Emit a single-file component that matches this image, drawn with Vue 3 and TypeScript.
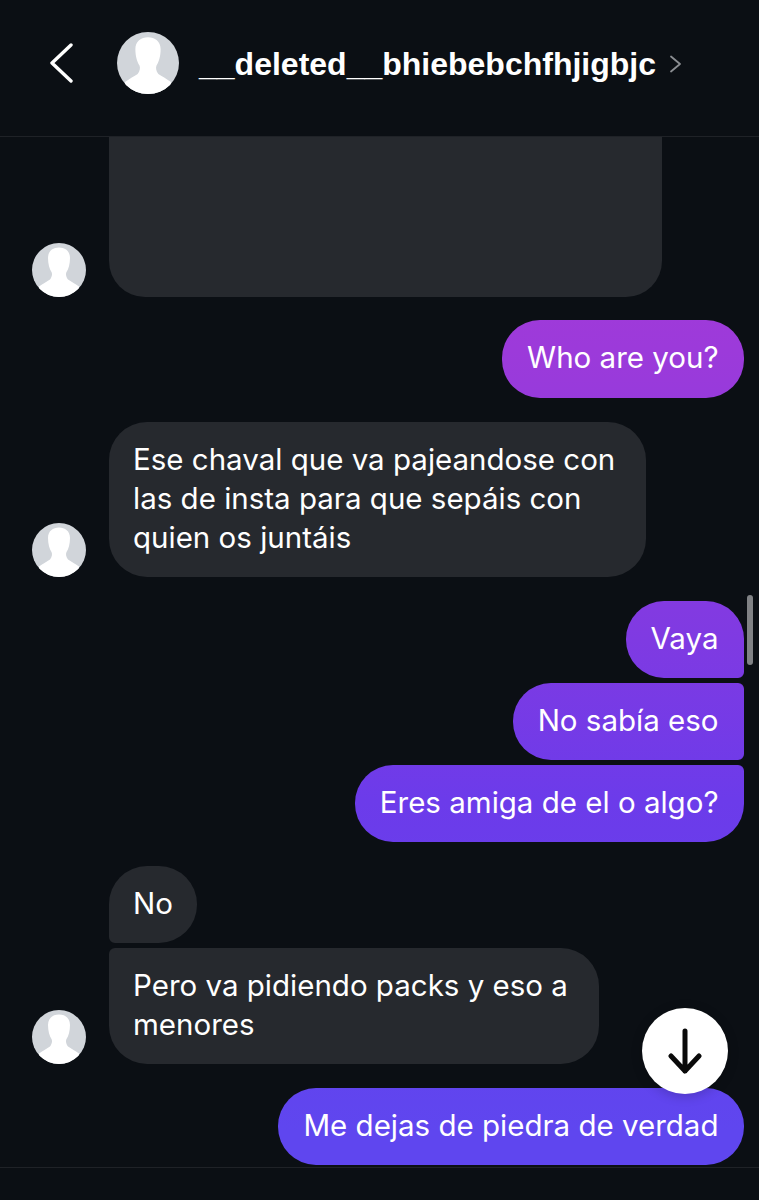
<script setup lang="ts">
interface Msg {
  id: number
  side: 'in' | 'out'
  lines: string[]
  avatar?: boolean
  shape?: string
}

const silhouette =
  'M27 4.500C33 4.500 38 8 38 15C38 21 36.500 26 34.500 29C33.500 31 34 34 36 36.500C39 38.500 43 40.500 47 43.500L47 54H7V43.500C11 40.500 15 38.500 18 36.500C20 34 20.500 31 19.500 29C17.500 26 16 21 16 15C16 8 21 4.500 27 4.500Z'

const messages: Msg[] = [
  { id: 1, side: 'out', lines: ['Who are you?'], shape: 'tall' },
  { id: 2, side: 'in', lines: ['Ese chaval que va pajeandose con', 'las de insta para que sepáis con', 'quien os juntáis'], avatar: true, shape: 'wrapped' },
  { id: 3, side: 'out', lines: ['Vaya'], shape: 'out-first' },
  { id: 4, side: 'out', lines: ['No sabía eso'], shape: 'out-mid' },
  { id: 5, side: 'out', lines: ['Eres amiga de el o algo?'], shape: 'out-last' },
  { id: 6, side: 'in', lines: ['No'], shape: 'in-first' },
  { id: 7, side: 'in', lines: ['Pero va pidiendo packs y eso a', 'menores'], avatar: true, shape: 'in-last wrapped' },
  { id: 8, side: 'out', lines: ['Me dejas de piedra de verdad'] }
]
</script>

<template>
  <div class="screen">
    <header class="top">
      <svg class="back" width="24" height="40" viewBox="0 0 24 40" fill="none">
        <path d="M22 2 L3 20 L22 38" stroke="#fff" stroke-width="3.400" stroke-linecap="round" stroke-linejoin="round" />
      </svg>
      <svg class="avatar big" viewBox="0 0 54 54">
        <defs>
          <clipPath id="clip-big"><circle cx="27" cy="27" r="27" /></clipPath>
        </defs>
        <circle cx="27" cy="27" r="27" fill="#d1d5da" />
        <path clip-path="url(#clip-big)" fill="#fff" :d="silhouette" />
      </svg>
      <span class="name">__deleted__bhiebebchfhjigbjc</span>
      <svg class="more" width="13" height="18" viewBox="0 0 13 18" fill="none">
        <path d="M2 1.500 L11 9 L2 16.500" stroke="#8b8e92" stroke-width="1.800" stroke-linecap="round" stroke-linejoin="round" />
      </svg>
    </header>

    <main class="thread">
      <div class="row in first">
        <svg class="avatar" viewBox="0 0 54 54">
          <defs>
            <clipPath id="clip-0"><circle cx="27" cy="27" r="27" /></clipPath>
          </defs>
          <circle cx="27" cy="27" r="27" fill="#d1d5da" />
          <path clip-path="url(#clip-0)" fill="#fff" :d="silhouette" />
        </svg>
        <div class="media"></div>
      </div>

      <div
        v-for="m in messages"
        :key="m.id"
        class="row"
        :class="[m.side, m.shape]"
      >
        <svg v-if="m.avatar" class="avatar" viewBox="0 0 54 54">
          <defs>
            <clipPath :id="`clip-${m.id}`"><circle cx="27" cy="27" r="27" /></clipPath>
          </defs>
          <circle cx="27" cy="27" r="27" fill="#d1d5da" />
          <path :clip-path="`url(#clip-${m.id})`" fill="#fff" :d="silhouette" />
        </svg>
        <div class="bubble">
          <template v-for="(l, i) in m.lines" :key="i">{{ l }}<br v-if="i < m.lines.length - 1" /></template>
        </div>
      </div>

      <div class="scrollbar"></div>
      <button class="jump" type="button" aria-label="Scroll to bottom">
        <svg width="36" height="46" viewBox="0 0 36 46" fill="none">
          <path d="M18 3 V43 M4 28 L18 43 L32 28" stroke="#0a0a0a" stroke-width="5" stroke-linecap="round" stroke-linejoin="round" />
        </svg>
      </button>
    </main>

    <footer class="bottom"></footer>
  </div>
</template>

<style>
html, body { margin: 0; background: #0b0f14; }
</style>

<style scoped>
.screen {
  width: 759px;
  height: 1200px;
  overflow: hidden;
  display: flex;
  flex-direction: column;
  background: #0b0f14;
  color: #fff;
  font-family: Inter, "Liberation Sans", sans-serif;
}
.top {
  height: 137px;
  box-sizing: border-box;
  flex: none;
  display: flex;
  align-items: center;
  padding: 0 0 11px 49px;
  border-bottom: 1px solid #1f2227;
}
.back { margin-right: 44px; }
.avatar { width: 54px; height: 54px; flex: none; display: block; }
.avatar.big { width: 62px; height: 62px; margin-right: 20px; }
.name {
  font-family: "Liberation Sans", Arial, sans-serif;
  font-size: 32px;
  font-weight: 700;
  line-height: 40px;
  padding-top: 2px;
  margin-right: 13px;
  white-space: nowrap;
}
.more { margin-top: 3px; }
.thread {
  position: relative;
  height: 1030px;
  flex: none;
  display: flex;
  flex-direction: column;
  overflow: visible;
}
.row {
  display: flex;
  align-items: flex-end;
  gap: 23.500px;
  margin-top: 24px;
  padding: 0 15px 0 31.500px;
}
.row.first { margin-top: 0; }
.row.out { justify-content: flex-end; }
.row.in:not(:has(.avatar)) { padding-left: 109px; }
.row.out-mid, .row.out-last, .row.in-last { margin-top: 5px; }
.row.tall { margin-top: 23px; }
.row.tall .bubble { padding-bottom: 21px; }
.media {
  width: 553px;
  height: 160px;
  background: #26292e;
  border-radius: 0 0 36px 36px;
}
.bubble {
  box-sizing: border-box;
  padding: 18px 24px 20px;
  font-size: 29.500px;
  line-height: 39px;
  border-radius: 38px;
  white-space: nowrap;
}
.in .bubble { background: #26292e; }
.wrapped .bubble { padding-right: 31px; }
.out .bubble {
  padding-left: 25px;
  padding-right: 25.500px;
  background: linear-gradient(180deg, #b23bd4 0px, #9c3ada 350px, #7f3ae2 640px, #6c3bea 800px, #5f46ef 1130px) fixed;
}
.out-first .bubble { border-bottom-right-radius: 6px; }
.out-mid .bubble { border-top-right-radius: 6px; border-bottom-right-radius: 6px; }
.out-last .bubble { border-top-right-radius: 6px; }
.in-first .bubble { border-bottom-left-radius: 6px; }
.in-last .bubble { border-top-left-radius: 6px; }
.scrollbar {
  position: absolute;
  left: 747px;
  top: 458px;
  width: 6px;
  height: 70px;
  border-radius: 3px;
  background: #808285;
}
.jump {
  position: absolute;
  left: 642px;
  top: 871px;
  width: 86px;
  height: 86px;
  padding: 0;
  border: 0;
  border-radius: 50%;
  background: #fff;
  display: flex;
  align-items: center;
  justify-content: center;
  box-shadow: 0 2px 12px rgba(0, 0, 0, 0.2);
}
.bottom {
  flex: 1;
  border-top: 1px solid #1f2227;
}
</style>
